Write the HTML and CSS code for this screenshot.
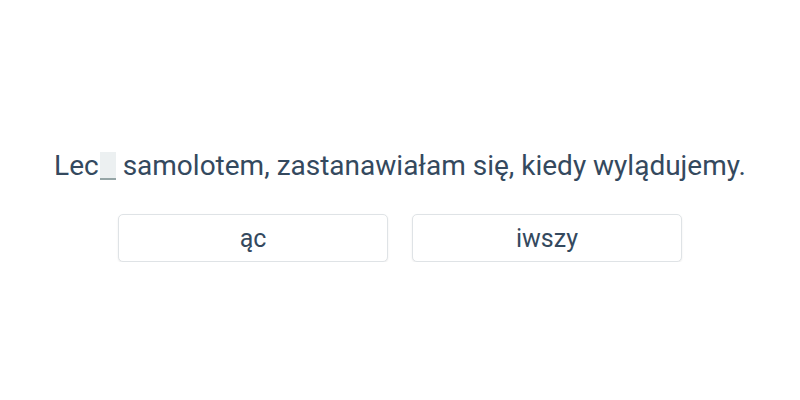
FILE: index.html
```html
<!DOCTYPE html>
<html lang="pl">
<head>
  <meta charset="UTF-8">
  <title>Uzupełnij zdanie</title>
  <link rel="stylesheet" href="styles.css">
</head>
<body>
  <div class="exercise">
    <p class="sentence">Lec<span class="gap"></span> samolotem, zastanawiałam się, kiedy wylądujemy.</p>
    <div class="options">
      <button class="option">ąc</button>
      <button class="option">iwszy</button>
    </div>
  </div>
</body>
</html>
```

FILE: styles.css
```css
body {
  margin: 0;
  background-color: #ffffff;
  font-family: Roboto, "Noto Sans", sans-serif;
  color: #34495e;
}

.exercise {
  padding-top: 149px;
  display: flex;
  flex-direction: column;
  align-items: center;
}

.sentence {
  font-size: 28px;
  line-height: 34px;
  margin: 0 0 31px 0;
}

.gap {
  display: inline-block;
  width: 16px;
  height: 26px;
  margin-left: 1px;
  background-color: #ecf0f1;
  border-bottom: 2px solid #95a5a6;
  vertical-align: -5px;
}

.options {
  display: flex;
  gap: 24px;
}

.option {
  width: 270px;
  height: 48px;
  background-color: #ffffff;
  border: 1px solid #dfe3e6;
  border-radius: 5px;
  box-shadow: 0 1px 2px rgba(0,0,0,0.08);
  font-family: Roboto, "Noto Sans", sans-serif;
  font-size: 25px;
  color: #34495e;
  cursor: pointer;
}
```
